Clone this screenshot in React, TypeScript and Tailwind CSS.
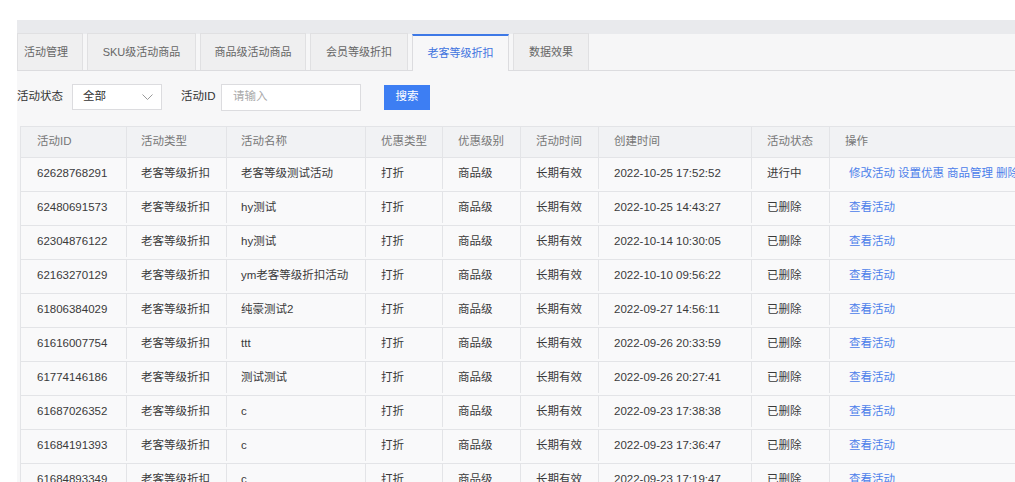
import React from "react";

const tabs = [
  { label: "活动管理", w: "w-[66px]", pad: "pr-[8px]" },
  { label: "SKU级活动商品", w: "w-[109px]", pad: "" },
  { label: "商品级活动商品", w: "w-[106px]", pad: "" },
  { label: "会员等级折扣", w: "w-[98px]", pad: "" },
  { label: "老客等级折扣", w: "w-[97px]", pad: "", active: true },
  { label: "数据效果", w: "w-[76px]", pad: "" },
];

const cols = [
  { title: "活动ID", w: "w-[106px]", pl: "pl-[16px]" },
  { title: "活动类型", w: "w-[100px]", pl: "pl-[14px]" },
  { title: "活动名称", w: "w-[139px]", pl: "pl-[14px]" },
  { title: "优惠类型", w: "w-[77px]", pl: "pl-[15px]" },
  { title: "优惠级别", w: "w-[78px]", pl: "pl-[15px]" },
  { title: "活动时间", w: "w-[78px]", pl: "pl-[15px]" },
  { title: "创建时间", w: "w-[153px]", pl: "pl-[15px]" },
  { title: "活动状态", w: "w-[78px]", pl: "pl-[15px]" },
  { title: "操作", w: "w-[220px]", pl: "pl-[15px]" },
];

const rows = [
  ["62628768291", "老客等级测试活动", "2022-10-25 17:52:52", "进行中"],
  ["62480691573", "hy测试", "2022-10-25 14:43:27", "已删除"],
  ["62304876122", "hy测试", "2022-10-14 10:30:05", "已删除"],
  ["62163270129", "ym老客等级折扣活动", "2022-10-10 09:56:22", "已删除"],
  ["61806384029", "纯豪测试2", "2022-09-27 14:56:11", "已删除"],
  ["61616007754", "ttt", "2022-09-26 20:33:59", "已删除"],
  ["61774146186", "测试测试", "2022-09-26 20:27:41", "已删除"],
  ["61687026352", "c", "2022-09-23 17:38:38", "已删除"],
  ["61684191393", "c", "2022-09-23 17:36:47", "已删除"],
  ["61684893349", "c", "2022-09-23 17:19:47", "已删除"],
];

export default function App() {
  return (
    <div className="w-[1015px] h-[482px] overflow-hidden bg-white font-['Liberation_Sans','Noto_Sans_CJK_SC',sans-serif] text-[11.5px]">
      <div className="h-[20px]" />
      <div className="ml-[17px] h-[462px] bg-[#f7f7f8] overflow-hidden">
        {/* top band */}
        <div className="h-[14px] bg-[#e9eaed]" />

        {/* tabs */}
        <div className="flex items-end gap-[4px] h-[37px] bg-[#f6f6f7] border-b border-[#dcdcdf] text-[11px]">
          {tabs.map((t) =>
            t.active ? (
              <div
                key={t.label}
                className={`${t.w} h-[37px] -mb-px flex items-center justify-center bg-[#f7f7f8] border-t-2 border-t-[#3d78e6] border-x border-x-[#dcdcdf] text-[#3f74df]`}
              >
                {t.label}
              </div>
            ) : (
              <div
                key={t.label}
                className={`${t.w} ${t.pad} h-[37px] flex items-center justify-center bg-[#efeff0] border border-b-0 border-[#e0e0e2] text-[#666]`}
              >
                {t.label}
              </div>
            )
          )}
        </div>

        {/* filters */}
        <div className="flex items-center h-[51px] pt-[1px] text-[#333]">
          <span className="w-[55px] shrink-0">活动状态</span>
          <div className="w-[90px] h-[26px] bg-white border border-[#dcdcdf] flex items-center justify-between pl-[10px] pr-[8px]">
            <span>全部</span>
            <svg width="11" height="7" viewBox="0 0 11 7" fill="none">
              <polyline points="0.5,0.5 5.5,5.5 10.5,0.5" stroke="#999" strokeWidth="1" />
            </svg>
          </div>
          <span className="ml-[19px] w-[40px] shrink-0">活动ID</span>
          <div className="w-[140px] h-[27px] bg-white border border-[#dcdcdf] flex items-center pl-[11px] text-[#aaa]">
            请输入
          </div>
          <button className="ml-[23px] w-[46px] h-[25px] bg-[#3d7ef3] text-white flex items-center justify-center">
            搜索
          </button>
        </div>

        {/* table */}
        <div className="ml-[3px] mt-[4px] w-[1200px] border-t border-l border-[#e3e4e7]">
          <div className="flex h-[31px] bg-[#f1f2f4] border-b border-[#e3e4e7] text-[#777]">
            {cols.map((c) => (
              <div key={c.title} className={`${c.w} ${c.pl} shrink-0 flex items-center border-r border-[#e3e4e7]`}>
                {c.title}
              </div>
            ))}
          </div>
          {rows.map((r, i) => {
            const cells = [r[0], "老客等级折扣", r[1], "打折", "商品级", "长期有效", r[2], r[3]];
            return (
              <div key={r[0]} className="flex h-[34px] pb-[2px] bg-[#f9f9fa] border-b border-[#e3e4e7] text-[#3a3a3a]">
                {cells.map((v, j) => (
                  <div key={j} className={`${cols[j].w} ${cols[j].pl} shrink-0 flex items-center border-r border-[#e3e4e7]`}>
                    {v}
                  </div>
                ))}
                <div className={`${cols[8].w} shrink-0 flex items-center pl-[19px] gap-[3px] text-[#4b80ea] whitespace-nowrap`}>
                  {i === 0 ? (
                    <>
                      <span>修改活动</span>
                      <span>设置优惠</span>
                      <span>商品管理</span>
                      <span>删除</span>
                    </>
                  ) : (
                    <span>查看活动</span>
                  )}
                </div>
              </div>
            );
          })}
        </div>
      </div>
    </div>
  );
}
